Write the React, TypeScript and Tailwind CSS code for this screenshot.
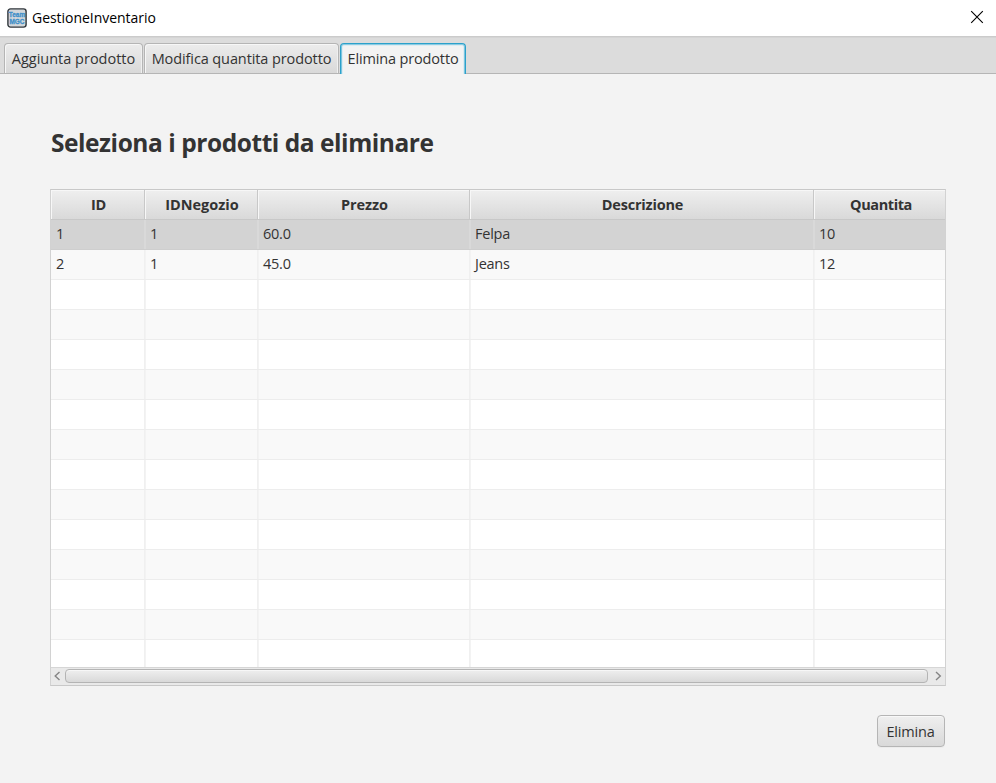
const columns = [
  { name: "ID", width: "w-[94px]", label: "tracking-[-0.2px] pl-0.5" },
  { name: "IDNegozio", width: "w-[113px]", label: "tracking-[0px] pl-0.5" },
  { name: "Prezzo", width: "w-[212px]", label: "tracking-[-0.1px] pl-0.5" },
  { name: "Descrizione", width: "w-[344px]", label: "tracking-[-0.2px] pl-0.5" },
  { name: "Quantita", width: "w-[131px]", label: "tracking-[-0.4px] pl-[3px]" },
];

const products = [
  ["1", "1", "60.0", "Felpa", "10"],
  ["2", "1", "45.0", "Jeans", "12"],
];

const rows = Array.from({ length: 15 }, (_, i) => products[i] ?? ["", "", "", "", ""]);

function Tab({ label, className, active = false }: { label: string; className: string; active?: boolean }) {
  return (
    <div
      className={`flex items-center justify-center whitespace-nowrap rounded-t-[4px] border border-b-0 ${className} ${
        active
          ? "h-[31px] border-[#2ba1cb] bg-[#f3f3f3] pb-px shadow-[inset_0_1px_0_#8ccbe2,inset_1px_0_0_#7cc4de,inset_-1px_0_0_#7cc4de,inset_2px_0_0_#dcecf2,inset_-2px_0_0_#dcecf2,inset_0_2px_0_#dcecf2]"
          : "h-[30px] border-[#b5b5b5] bg-linear-to-b from-[#ececec] to-[#d9d9d9] pt-px shadow-[inset_1px_1px_0_#f7f7f7,inset_-1px_0_0_#f0f0f0]"
      }`}
    >
      {label}
    </div>
  );
}

export default function App() {
  return (
    <div className="flex h-[783px] w-[996px] flex-col overflow-hidden bg-[#f3f3f3] font-['Open_Sans','Noto_Sans',sans-serif] text-[14.5px] leading-5 text-[#333333]">
      <header className="flex h-9 shrink-0 items-center justify-between bg-white pl-[7px] pr-3">
        <div className="flex items-center">
          <svg className="h-5 w-5" viewBox="0 0 20 20">
            <rect x="0.9" y="0.9" width="18.2" height="18.2" rx="2.6" fill="#d3d7da" stroke="#30363b" strokeWidth="1.4" />
            <g
              className="font-['Liberation_Sans',sans-serif] font-bold"
              fontSize="7"
              fill="#3d8fc9"
              stroke="#3d8fc9"
              strokeWidth="0.3"
              textAnchor="middle"
            >
              <text x="10" y="8.8" textLength="16.4" lengthAdjust="spacingAndGlyphs">Team</text>
              <text x="10" y="16" textLength="15" lengthAdjust="spacingAndGlyphs">MGC</text>
            </g>
          </svg>
          <span className="ml-[5px] text-[14px] tracking-[-0.04px] text-black">GestioneInventario</span>
        </div>
        <svg className="mb-0.5 h-[14px] w-[14px]" viewBox="0 0 14 14" fill="none" stroke="#000" strokeWidth="1.1">
          <path d="M1.2 1.2 12.8 12.8M12.8 1.2 1.2 12.8" />
        </svg>
      </header>

      <nav className="flex h-[38px] shrink-0 items-end bg-[#dcdcdc] pl-1 shadow-[inset_0_1px_0_#cbcbcb,inset_0_2px_0_#d4d4d4,inset_0_-1px_0_#b5b5b5]">
        <Tab label="Aggiunta prodotto" className="mb-px w-[139px] tracking-[0px]" />
        <Tab label="Modifica quantita prodotto" className="mb-px ml-px w-[195px] tracking-[-0.1px]" />
        <Tab label="Elimina prodotto" active className="ml-px w-[126px] tracking-[-0.15px]" />
      </nav>

      <main className="flex flex-col px-[50px] pt-[50px]">
        <h1 className="h-[65px] pl-px text-[24.5px] font-bold leading-[38px] tracking-[-0.45px]">
          Seleziona i prodotti da eliminare
        </h1>

        <section className="flex h-[497px] w-[896px] flex-col overflow-hidden border border-[#c8c8c8] border-x-[#d2d2d2] bg-white">
          <div className="flex h-[30px] shrink-0 border-b border-[#c8c8c8] bg-linear-to-b from-[#efefef] to-[#d9d9d9] font-bold">
            {columns.map((c) => (
              <div
                key={c.name}
                className={`flex shrink-0 items-center justify-center border-r border-[#c8c8c8] shadow-[inset_1px_1px_0_#f7f7f7] last:border-r-0 ${c.width} ${c.label}`}
              >
                {c.name}
              </div>
            ))}
          </div>
          <div className="h-[447px] shrink-0 overflow-hidden">
            {rows.map((row, i) => (
              <div
                key={i}
                className={`flex h-[30px] border-b ${
                  i === 0 ? "border-[#cecece] bg-[#d3d3d3]" : i % 2 ? "border-[#ededed] bg-[#f9f9f9]" : "border-[#ededed] bg-white"
                }`}
              >
                {row.map((value, j) => (
                  <div
                    key={j}
                    className={`flex shrink-0 items-center border-r pb-px pl-[5px] tracking-[-0.25px] last:border-r-0 ${
                      i === 0
                        ? "border-[#d9d9d9] not-first:shadow-[inset_1px_0_0_#d9d9d9]"
                        : "border-[#f0f0f0] not-first:shadow-[inset_1px_0_0_#f3f3f3]"
                    } ${columns[j].width}`}
                  >
                    {value}
                  </div>
                ))}
              </div>
            ))}
          </div>
          <div className="flex h-[18px] shrink-0 items-center justify-between border-t border-[#d6d6d6] bg-[#e9e9e9] px-[3px] pb-px">
            <svg className="h-[10px] w-[7px]" viewBox="0 0 7 10" fill="none" stroke="#858585" strokeWidth="1.4">
              <path d="M5.5 1 1.2 5 5.5 9" />
            </svg>
            <div className="ml-1 h-[14px] w-[863px] rounded-[4px] border border-[#b4b4b4] bg-linear-to-b from-[#efefef] to-[#d9d9d9] shadow-[inset_0_1px_0_#f7f7f7]" />
            <svg className="ml-auto h-[10px] w-[7px]" viewBox="0 0 7 10" fill="none" stroke="#858585" strokeWidth="1.4">
              <path d="M1 1 5.3 5 1 9" />
            </svg>
          </div>
        </section>

        <button className="mr-px mt-[29px] flex h-8 w-[68px] items-center justify-center self-end rounded-[4px] border border-[#b5b5b5] bg-linear-to-b from-[#efefef] to-[#d9d9d9] pr-px pt-0.5 tracking-[-0.2px] shadow-[inset_0_1px_0_#f8f8f8,0_1px_0_#ececec]">
          Elimina
        </button>
      </main>
    </div>
  );
}
